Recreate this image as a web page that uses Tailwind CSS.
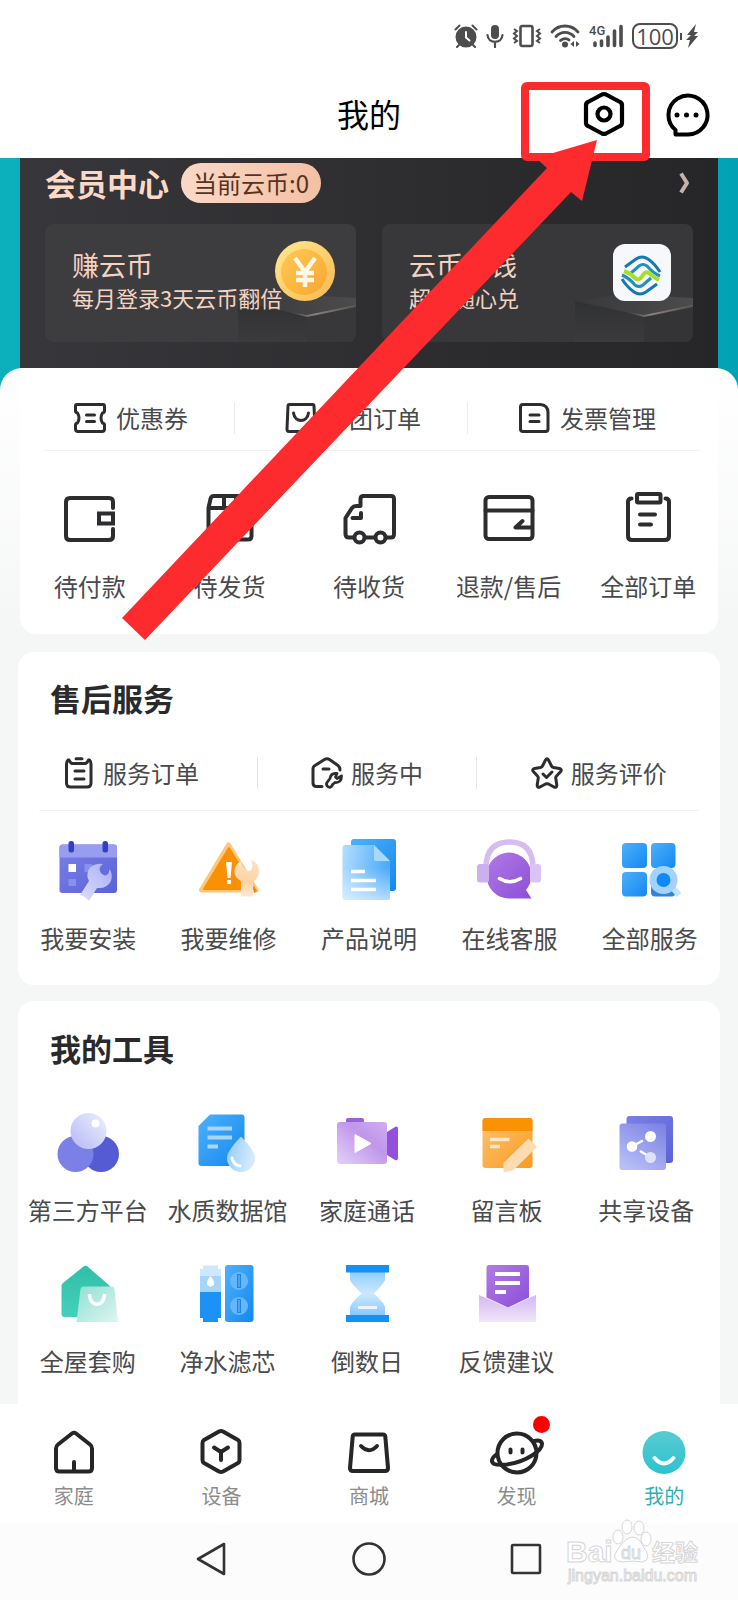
<!DOCTYPE html>
<html lang="zh-CN">
<head>
    <meta charset="UTF-8">
    <meta name="viewport" content="width=device-width, initial-scale=1.0">
    <title>我的</title>
    <script src="https://cdn.jsdelivr.net/npm/@tailwindcss/browser@4"></script>
</head>
<body class="relative bg-white font-['Noto_Sans_CJK_SC',sans-serif] text-[#4a4a4c]">
    <!-- Status bar -->
    <div class="flex h-[72px] items-center justify-end gap-2 pr-10 text-[#4d4d4d]">
        <svg class="h-6 w-6" viewBox="0 0 24 24" fill="none" stroke="currentColor" stroke-width="2" stroke-linecap="round">
            <circle cx="12" cy="13" r="9.5" fill="currentColor"/>
            <path d="M1.5 5.5L5.5 1.5M22.5 5.5L18.5 1.5M5 21L3 23M19 21L21 23"/>
            <path d="M12 8V13.5L15.5 16.5" stroke="#fff"/>
        </svg>
        <svg class="h-6 w-[18px]" viewBox="0 0 18 24" fill="none" stroke="currentColor" stroke-width="2.2" stroke-linecap="round">
            <rect x="5" y="1" width="8" height="14" rx="4" fill="currentColor" stroke="none"/>
            <path d="M1.5 11C2 20 16 20 16.5 11M9 18V23"/>
        </svg>
        <svg class="h-6 w-[30px]" viewBox="0 0 30 24" fill="none" stroke="currentColor" stroke-width="2">
            <rect x="8.5" y="2" width="12" height="20" rx="2" stroke-width="2.6"/>
            <path d="M2 5L5 7L2 9.5L5 12L2 14.5L5 17L2 19M28 5L25 7L28 9.5L25 12L28 14.5L25 17L28 19"/>
        </svg>
        <svg class="h-6 w-[30px]" viewBox="0 0 30 24" fill="none" stroke="currentColor" stroke-width="2.8" stroke-linecap="round">
            <path d="M2 8C9 0 21 0 28 8M6 12.5C11 7 19 7 24 12.5M10.5 16.5C13 14 17 14 19 16"/>
            <circle cx="15" cy="20.5" r="3" fill="currentColor" stroke="none"/>
            <path d="M24 17V23L20.5 20ZM26 17V23L29.5 20Z" fill="currentColor" stroke="none"/>
        </svg>
        <svg class="h-7 w-9 overflow-visible" viewBox="0 0 36 28" fill="none" stroke="currentColor" stroke-width="3.6" stroke-linecap="round">
            <text x="1" y="13" font-size="13" font-weight="500" font-family="Roboto, sans-serif" fill="currentColor" stroke="none">4G</text>
            <path d="M7 21V23.500M13.500 19V23.500M20 15V23.500M26.500 9V23.500M33 4.500V23.500"/>
        </svg>
        <div class="flex items-center">
            <div class="flex h-[26px] w-[46px] items-center justify-center rounded-lg border-2 border-[#4d4d4d] font-['Open_Sans',sans-serif] text-[22px] leading-[22px]">100</div>
            <div class="ml-[2px] h-[7px] w-[2px] bg-[#4d4d4d]"></div>
            <svg class="ml-1 h-6 w-3" viewBox="0 0 12 24" fill="currentColor"><path d="M10 0L1 11H5L0 16H4L2 24L12 12H8L12 8H8Z"/></svg>
        </div>
    </div>

    <!-- Title bar -->
    <header class="grid h-[86px] grid-cols-3 items-center px-7">
        <h1 class="col-start-2 pb-1 text-center text-[32px] leading-[48px] text-black">我的</h1>
        <div class="flex items-center justify-end gap-[34px]">
            <button type="button" aria-label="设置">
                <svg class="h-12 w-12" viewBox="0 0 48 48" fill="none" stroke="#000" stroke-width="4.2" stroke-linejoin="round">
                    <path d="M22 3.5Q24 2.500 26 3.5L40 11Q42 12 42 14V32Q42 34 40 35L26 42.5Q24 43.5 22 42.5L8 35Q6 34 6 32V14Q6 12 8 11Z"/>
                    <circle cx="24" cy="23" r="6.5"/>
                </svg>
            </button>
            <button type="button" aria-label="消息">
                <svg class="h-12 w-12" viewBox="0 0 48 48" fill="none" stroke="#000" stroke-width="4" stroke-linejoin="round">
                    <path d="M13.5 43.5V39A19.5 19.5 0 1 1 25 43.5Z"/>
                    <g fill="#000" stroke="none"><circle cx="15" cy="24" r="2.5"/><circle cx="24.5" cy="24" r="2.5"/><circle cx="34" cy="24" r="2.5"/></g>
                </svg>
            </button>
        </div>
    </header>

    <main class="bg-gradient-to-r from-[#0cb0bc] to-[#00a2b4]">
        <!-- Member center -->
        <section class="mx-5 bg-gradient-to-r from-[#37373b] to-[#262628] px-[25px] pt-[5px] pb-[26px]">
            <div class="flex h-10 items-center">
                <h2 class="text-[31px] leading-10 font-bold text-[#fcd9c7]">会员中心</h2>
                <span class="ml-3 flex h-10 items-center rounded-full bg-gradient-to-r from-[#fbd8c6] to-[#f4c0a4] px-3 text-2xl text-[#54331f]">当前云币:0</span>
                <a href="#" aria-label="会员中心" class="ml-auto">
                    <svg class="h-6 w-4" viewBox="0 0 16 24" fill="none" stroke="#c5b3aa" stroke-width="4"><path d="M4 2.5L10 12L4 21.5" stroke-linejoin="round"/></svg>
                </a>
            </div>
            <div class="mt-[21px] grid grid-cols-2 gap-[26px]">
                <a href="#" class="relative h-[118px] overflow-hidden rounded-lg bg-[#3d3d40] pt-5 pl-[27px]">
                    <svg class="absolute right-0 bottom-0 h-[118px] w-[118px]" viewBox="0 0 118 118">
                        <defs>
                            <linearGradient id="blockL" x2="0" y2="1"><stop stop-color="#303133"/><stop offset="1" stop-color="#3b3b3e"/></linearGradient>
                            <linearGradient id="blockTop"><stop stop-color="#38383b"/><stop offset=".7" stop-color="#464647"/><stop offset="1" stop-color="#4d4b4b"/></linearGradient>
                            <linearGradient id="edge"><stop stop-color="#8a817c" stop-opacity="0"/><stop offset=".4" stop-color="#8a817c"/><stop offset="1" stop-color="#8a817c" stop-opacity=".3"/></linearGradient>
                            <linearGradient id="coinG" x2="1" y2="1"><stop stop-color="#ffe98f"/><stop offset="1" stop-color="#f7b850"/></linearGradient>
                            <linearGradient id="coinIn" x2="1" y2="1"><stop stop-color="#fdca55"/><stop offset="1" stop-color="#f9a630"/></linearGradient>
                        </defs>
                        <path d="M0 77L69 92V118H0Z" fill="url(#blockL)"/>
                        <path d="M69 92L118 82V118H69Z" fill="#38383a"/>
                        <path d="M0 77L50 70L118 74V82L69 92Z" fill="url(#blockTop)"/>
                        <path d="M50 88L69 91L118 81V83L69 93Z" fill="url(#edge)"/>
                        <circle cx="67" cy="47" r="30" fill="url(#coinG)"/>
                        <circle cx="66" cy="48" r="23" fill="url(#coinIn)"/>
                        <path d="M57 34L67 48L77 34M67 48V63M58 49H76M58 56H76" fill="none" stroke="#fff8e8" stroke-width="4.5"/>
                    </svg>
                    <p class="relative text-[27px] leading-[42px] text-[#f6d2c1]">赚云币</p>
                    <p class="relative text-[22px] leading-[22px] text-[#f6d2c1]">每月登录3天云币翻倍</p>
                </a>
                <a href="#" class="relative h-[118px] overflow-hidden rounded-lg bg-[#38383a] pt-5 pl-[27px]">
                    <svg class="absolute right-0 bottom-0 h-[118px] w-[118px]" viewBox="0 0 118 118">
                        <path d="M0 77L69 92V118H0Z" fill="url(#blockL)"/>
                        <path d="M69 92L118 82V118H69Z" fill="#343436"/>
                        <path d="M0 77L50 70L118 74V82L69 92Z" fill="url(#blockTop)"/>
                        <path d="M50 88L69 91L118 81V83L69 93Z" fill="url(#edge)"/>
                        <rect x="38" y="20" width="58" height="57" rx="12" fill="#f7f8fb"/>
                        <!-- two mirrored ribbons around a green wave -->
                        <g fill="none" stroke-width="3">
                            <path d="M50 43L61 35Q67 31 73 35Q80 40 85 48" stroke="#1478b8"/>
                            <path d="M56 49L64 42Q68 39 72 42Q78 49 85 52" stroke="#2190bd"/>
                            <path d="M82 60L71 68Q65 72 59 68Q52 63 47 55" stroke="#1478b8"/>
                            <path d="M76 54L68 61Q64 64 60 61Q54 54 47 51" stroke="#2190bd"/>
                            <path d="M49 47Q55 49 60 54Q64 58 68 51Q71 46 75 50Q80 54 84 56" stroke="#a6df25" stroke-width="4"/>
                        </g>
                    </svg>
                    <p class="relative text-[27px] leading-[42px] text-[#f6d2c1]">云币当钱</p>
                    <p class="relative text-[22px] leading-[22px] text-[#f6d2c1]">超值随心兑</p>
                </a>
            </div>
        </section>

        <div class="overflow-hidden rounded-t-[22px] bg-gradient-to-b from-white to-[#f5f7f6] to-25%">
            <!-- Orders -->
            <section class="mx-5 rounded-b-2xl bg-white pt-[18px] pb-[30px]">
                <nav class="flex h-16 items-center pr-4 pl-1 text-2xl">
                    <a href="#" class="flex flex-auto items-center justify-center gap-[10px] pl-1">
                        <svg class="h-8 w-8" viewBox="0 0 32 32" fill="none" stroke="#2d2d2f" stroke-width="3" stroke-linejoin="round" stroke-linecap="round"><path d="M3 2.5H29Q30.5 2.5 30.5 4V9Q30.5 10.5 28.5 11Q25.5 16 28.5 21Q30.5 21.5 30.5 23V27Q30.5 29.5 28 29.5H4Q1.5 29.5 1.5 27V23Q1.5 21.5 3.5 21Q6.5 16 3.5 11Q1.5 10.5 1.5 9V4Q1.5 2.5 3 2.5ZM12.5 13H20.5M12.5 19.5H20.5"/></svg>
                        优惠券
                    </a>
                    <span class="h-8 w-px bg-[#ececec]"></span>
                    <a href="#" class="flex flex-auto items-center justify-center gap-2 pl-1">
                        <svg class="h-8 w-8" viewBox="0 0 32 32" fill="none" stroke="#2d2d2f" stroke-width="3" stroke-linejoin="round" stroke-linecap="round"><path d="M4.5 2.5H27.5Q29 2.5 29 4L30 27Q30 29.5 28 29.5H4Q2 29.5 2 27L3 4Q3 2.5 4.5 2.5ZM8.5 11C10 21 22 21 23.5 11"/></svg>
                        拼团订单
                    </a>
                    <span class="h-8 w-px bg-[#ececec]"></span>
                    <a href="#" class="flex flex-auto items-center justify-center gap-[10px] pl-1">
                        <svg class="h-8 w-8" viewBox="0 0 32 32" fill="none" stroke="#2d2d2f" stroke-width="3" stroke-linejoin="round" stroke-linecap="round"><path d="M5 2.5H22Q30 3 30 10.5V27Q30 29.5 27.5 29.5H5Q2.5 29.5 2.5 27V5Q2.5 2.5 5 2.5ZM12 13H21M12 19.5H21"/></svg>
                        发票管理
                    </a>
                </nav>
                <div class="mr-[18px] ml-6 h-px bg-[#f0f0f0]"></div>
                <nav class="grid grid-cols-5 pt-[35px] text-2xl leading-9 whitespace-nowrap">
                    <a href="#" class="flex flex-col items-center gap-[18px]">
                        <svg class="h-16 w-16" viewBox="0 0 64 64" fill="none" stroke="#2d2d2f" stroke-width="4"><path d="M55 22V16Q55 12 51 12H12Q8 12 8 16V50Q8 54 12 54H51Q55 54 55 50V43" stroke-linecap="round"/><path d="M57 27.5H41V37.5H57M55 26V39"/></svg>
                        待付款
                    </a>
                    <a href="#" class="flex flex-col items-center gap-[18px]">
                        <svg class="h-16 w-16" viewBox="0 0 64 64" fill="none" stroke="#2d2d2f" stroke-width="4" stroke-linejoin="round"><path d="M17 10H49Q52 10 52.5 13L54.5 22V50Q54.5 53.5 51 53.5H15Q11.5 53.5 11.5 50V22L13.5 13Q14 10 17 10ZM11.5 22H54.5M27 10V22M39 10V22M43 43H47"/></svg>
                        待发货
                    </a>
                    <a href="#" class="flex flex-col items-center gap-[18px]">
                        <svg class="h-16 w-16" viewBox="0 0 64 64" fill="none" stroke="#2d2d2f" stroke-width="4" stroke-linejoin="round" stroke-linecap="round"><path d="M17 51.5H12Q8.5 51.5 8.5 48V32L15 22Q16.5 20 19 20H23.5V13Q23.5 10 26.5 10H54Q57 10 57 13V48Q57 51.5 54 51.5H49M28 51.5H38M24 27V32H15.5"/><circle cx="22.5" cy="51.5" r="5"/><circle cx="43.5" cy="51.5" r="5"/></svg>
                        待收货
                    </a>
                    <a href="#" class="flex flex-col items-center gap-[18px]">
                        <svg class="h-16 w-16" viewBox="0 0 64 64" fill="none" stroke="#2d2d2f" stroke-width="4" stroke-linejoin="round" stroke-linecap="round"><rect x="8.5" y="11" width="47" height="42" rx="3.5"/><path d="M8.5 24.5H55.5M45.5 35L38.5 41.5H55"/></svg>
                        退款/售后
                    </a>
                    <a href="#" class="flex flex-col items-center gap-[18px]">
                        <svg class="h-16 w-16" viewBox="0 0 64 64" fill="none" stroke="#2d2d2f" stroke-width="4" stroke-linejoin="round" stroke-linecap="round"><path d="M15.5 12.5Q12 12.5 12 16V50Q12 54 16 54H49Q53 54 53 50V16Q53 12.5 49.5 12.5"/><rect x="21" y="8" width="23.5" height="8.5" rx="1"/><path d="M24 28.5H39M24 38.5H35"/></svg>
                        全部订单
                    </a>
                </nav>
            </section>

            <!-- After-sales -->
            <section class="mx-[18px] mt-[18px] rounded-2xl bg-white pt-[23px] pb-[29px]">
                <h2 class="pl-8 text-[31px] leading-[46px] font-bold text-[#2a2a2c]">售后服务</h2>
                <nav class="mt-[15px] flex h-[74px] items-center text-2xl">
                    <a href="#" class="flex w-[34%] flex-none items-center gap-2 pl-[45px]">
                        <svg class="h-8 w-8" viewBox="0 0 32 32" fill="none" stroke="#2d2d2f" stroke-width="3" stroke-linejoin="round" stroke-linecap="round"><path d="M6 3H5Q3.5 4 3.5 8V26Q3.5 30 7.5 30H24Q28 30 28 26V8Q28 4 26.5 3H25.5M6 3C8 7 9 6.5 11.5 6.5H20C22.5 6.5 23.5 7 25.5 3M13 1.8H19M12 14H21M12 22H21"/></svg>
                        服务订单
                    </a>
                    <span class="h-8 w-px bg-[#e6e6e6]"></span>
                    <a href="#" class="flex flex-auto items-center justify-center gap-2">
                        <svg class="h-8 w-8" viewBox="0 0 32 32" fill="none" stroke="#2d2d2f" stroke-width="3" stroke-linejoin="round" stroke-linecap="round"><path d="M11 29.5H5.5Q2 29.5 2 26V12Q2 9.5 4 8.5L13.5 2.5Q16 1 18.5 2.5L27 8.5Q29 10 29 13M12 12H18"/><path d="M26 16.5Q20 15.5 19 21.5L16 25.5Q14.5 28.5 17.5 30Q20.5 31 21.5 27.5L24 25.5Q30.5 26 30.5 19L26 21.5L24.5 20Z" stroke-width="2.8"/></svg>
                        服务中
                    </a>
                    <span class="h-8 w-px bg-[#e6e6e6]"></span>
                    <a href="#" class="flex flex-auto items-center justify-center gap-2">
                        <svg class="h-8 w-8" viewBox="0 0 32 32" fill="none" stroke="#2d2d2f" stroke-width="3" stroke-linejoin="round" stroke-linecap="round"><path d="M14.5 3Q16 .5 17.5 3L20.5 9Q21 10 22.5 10.5L28.5 11.5Q31.5 12.5 29.5 14.8L25.5 19Q24.5 20 24.8 21.5L25.8 28Q26 31 23 30L17.5 27Q16 26.5 14.5 27L9 30Q6 31 6.2 28L7.2 21.5Q7.5 20 6.5 19L2.5 14.8Q.5 12.5 3.5 11.5L9.5 10.5Q11 10 11.5 9Z"/><path d="M12 17L15.5 20.5L21 15"/></svg>
                        服务评价
                    </a>
                </nav>
                <div class="mx-[21px] h-px bg-[#f2f2f2]"></div>
                <nav class="grid grid-cols-5 pt-[27px] text-2xl leading-9 whitespace-nowrap">
                    <a href="#" class="flex flex-col items-center gap-[18px]">
                        <svg class="h-16 w-16" viewBox="0 0 64 64">
                            <defs>
                                <linearGradient id="indigo" x2="1" y2="1"><stop stop-color="#7b80e6"/><stop offset="1" stop-color="#5a62d8"/></linearGradient>
                                <linearGradient id="lilac" x1="1" x2="0" y2="1"><stop stop-color="#a9aef3"/><stop offset="1" stop-color="#dcdefb"/></linearGradient>
                            </defs>
                            <rect x="3.5" y="6.5" width="57.5" height="48.5" rx="3" fill="url(#indigo)"/>
                            <path d="M3.5 19.5V9.5Q3.5 6.5 6.5 6.5H58Q61 6.5 61 9.5V19.5Z" fill="#989df0"/>
                            <rect x="12.5" y="3" width="5.5" height="11.5" rx="2.5" fill="#2f3fcb"/><rect x="46.5" y="3" width="5.5" height="11.5" rx="2.5" fill="#2f3fcb"/>
                            <path d="M12.5 26H20V34H12.5Z" fill="#fff"/><path d="M12.5 41H20V48H12.5ZM28.5 26H36V34H28.5Z" fill="#8a90ec"/>
                            <path d="M47 26Q37 24.5 32.5 32Q30 38 33 43L24 57Q29 58 33 63L41 50Q51 51 55 43Q57 36 53.5 31Q53 37 49 37.5Q44 36 43.5 31Q44 27.5 47 26Z" fill="url(#lilac)"/>
                        </svg>
                        我要安装
                    </a>
                    <a href="#" class="flex flex-col items-center gap-[18px]">
                        <svg class="h-16 w-16" viewBox="0 0 64 64">
                            <defs><linearGradient id="peach" x2="0" y2="1"><stop stop-color="#fde3c6"/><stop offset=".6" stop-color="#fbd3a4"/><stop offset="1" stop-color="#fde8d2"/></linearGradient></defs>
                            <path d="M31.5 7L59 52H4.5Z" fill="#fb9106" stroke="#fcc67c" stroke-width="5" stroke-linejoin="round"/>
                            <path d="M32 10L57 51H7Z" fill="#fa9104" stroke="#fa9104" stroke-width="2" stroke-linejoin="round"/>
                            <path d="M29 24H35L33.5 40H30.5ZM30 42H34V46H30Z" fill="#fff"/>
                            <path d="M44 23Q37 27 37.5 34Q38 40 44 43V58.5H56V44Q62 40 62 32Q61 25 54 21.5Q57 30 53 33Q45 32 44 23Z" fill="url(#peach)"/>
                            <path d="M57 48L60 53L57 55Z" fill="#e08a20"/>
                        </svg>
                        我要维修
                    </a>
                    <a href="#" class="flex flex-col items-center gap-[18px]">
                        <svg class="h-16 w-16" viewBox="0 0 64 64">
                            <defs>
                                <linearGradient id="blue" x2="1" y2="1"><stop stop-color="#4fb0fa"/><stop offset="1" stop-color="#1288f0"/></linearGradient>
                                <linearGradient id="sky" x2="1" y2=".2"><stop stop-color="#b5dffd"/><stop offset="1" stop-color="#4aabfa"/></linearGradient>
                                <linearGradient id="fadeW" x2="0" y2="1"><stop stop-color="#fff" stop-opacity="0"/><stop offset="1" stop-color="#fff" stop-opacity=".6"/></linearGradient>
                            </defs>
                            <rect x="14" y="1" width="45" height="52" rx="3" fill="url(#blue)"/>
                            <path d="M8.5 7H37L53 23V59Q53 62 50 62H8.5Q5.5 62 5.5 59V10Q5.5 7 8.5 7Z" fill="url(#sky)"/>
                            <path d="M5.5 30H53V59Q53 62 50 62H8.5Q5.5 62 5.5 59Z" fill="url(#fadeW)"/>
                            <path d="M37 7L53 23H39Q37 23 37 21Z" fill="#a9d8fd"/>
                            <path d="M14 33.5H28M14 42.5H39M14 51.5H39" stroke="#fff" stroke-width="3.5"/>
                        </svg>
                        产品说明
                    </a>
                    <a href="#" class="flex flex-col items-center gap-[18px]">
                        <svg class="h-16 w-16" viewBox="0 0 64 64">
                            <defs>
                                <linearGradient id="violet" x2="1" y2="1"><stop stop-color="#b27ae4"/><stop offset="1" stop-color="#8b4fd8"/></linearGradient>
                            </defs>
                            <path d="M49 52L54.5 60.5H32A22.5 23 0 1 1 54.5 38Q54 46 49 52Z" fill="url(#violet)"/>
                            <path d="M9 28Q10 4 32.5 4Q55 4 56 28" fill="none" stroke="#d5bdf1" stroke-width="5.5"/>
                            <rect x="0" y="26" width="12" height="18.5" rx="3" fill="#cdaeee"/><rect x="53" y="26" width="11" height="18.5" rx="3" fill="#d9c3f3"/>
                            <path d="M22.5 40.5Q33 47 43.5 40.5" fill="none" stroke="#fff" stroke-width="3.5" stroke-linecap="round"/>
                        </svg>
                        在线客服
                    </a>
                    <a href="#" class="flex flex-col items-center gap-[18px]">
                        <svg class="h-16 w-16" viewBox="0 0 64 64">
                            <rect x="4" y="5" width="25" height="25" rx="4" fill="url(#blue)"/><rect x="33" y="5" width="24.5" height="25" rx="4" fill="url(#blue)"/>
                            <rect x="4" y="34" width="25" height="24.5" rx="4" fill="url(#blue)"/><rect x="33" y="34" width="24.5" height="24.5" rx="4" fill="#2e86d8"/>
                            <path d="M55 50L61 57" stroke="#c4e3fd" stroke-width="6"/>
                            <circle cx="45.5" cy="42" r="14" fill="#a3d3fc"/><circle cx="45.5" cy="42" r="7" fill="#0f89f5"/>
                        </svg>
                        全部服务
                    </a>
                </nav>
            </section>

            <!-- Tools -->
            <section class="mx-[18px] mt-4 rounded-t-2xl bg-white pt-6 pb-[25px]">
                <h2 class="pl-8 text-[31px] leading-[46px] font-bold text-[#2a2a2c]">我的工具</h2>
                <nav class="mt-[39px] grid grid-cols-5 gap-y-[33px] pr-1 text-2xl leading-9 whitespace-nowrap">
                    <a href="#" class="flex flex-col items-center gap-[18px]">
                        <svg class="h-16 w-16" viewBox="0 0 64 64">
                            <defs><linearGradient id="pearl" x1="1" x2="0" y2="1"><stop stop-color="#eef0fd"/><stop offset="1" stop-color="#b4b8f5"/></linearGradient></defs>
                            <circle cx="45" cy="44" r="18" fill="#555bd2"/><circle cx="19.5" cy="44" r="18" fill="#7a80e6"/>
                            <circle cx="32.5" cy="21" r="18" fill="url(#pearl)"/><circle cx="39.5" cy="13.5" r="4" fill="#fff"/>
                        </svg>
                        第三方平台
                    </a>
                    <a href="#" class="flex flex-col items-center gap-[18px]">
                        <svg class="h-16 w-16" viewBox="0 0 64 64">
                            <defs><linearGradient id="dropG" x2="1" y2=".3"><stop stop-color="#8ecafb"/><stop offset="1" stop-color="#d5ebfd"/></linearGradient></defs>
                            <path d="M15 4.5H46.5Q49.5 4.5 49.5 7.5V53Q49.5 56 46.5 56H6.5Q3.5 56 3.5 53V16Z" fill="url(#blue)"/>
                            <path d="M12.5 18.5H37M12.5 27.5H37M12.5 36.5H23" stroke="#a6d6fd" stroke-width="4"/>
                            <path d="M46 26.5Q60 41 60 48A14 14 0 0 1 32 48Q32 41 46 26.5Z" fill="url(#dropG)"/>
                            <path d="M37 48Q38.5 55 45 56" fill="none" stroke="#fff" stroke-width="3" stroke-linecap="round"/>
                        </svg>
                        水质数据馆
                    </a>
                    <a href="#" class="flex flex-col items-center gap-[18px]">
                        <svg class="h-16 w-16" viewBox="0 0 64 64">
                            <defs><linearGradient id="cam" x1="1" x2="0" y2="1"><stop stop-color="#cfaef0"/><stop offset=".4" stop-color="#c096ea"/><stop offset="1" stop-color="#e3d2f7"/></linearGradient></defs>
                            <path d="M11 14V10Q11 8 13 8H27Q29 8 29 10V14Z" fill="#9a62d8"/>
                            <rect x="2" y="12" width="50" height="42" rx="3" fill="url(#cam)"/>
                            <path d="M52 22L60 17Q63 15.5 63 19V48Q63 51 60 50L52 45Z" fill="#9450db"/>
                            <path d="M20 24.5L36 33.5L20 42.5Z" fill="#fff" stroke="#fff" stroke-linejoin="round"/>
                        </svg>
                        家庭通话
                    </a>
                    <a href="#" class="flex flex-col items-center gap-[18px]">
                        <svg class="h-16 w-16" viewBox="0 0 64 64">
                            <defs><linearGradient id="note" x2="1" y2="1"><stop stop-color="#fdc374"/><stop offset="1" stop-color="#fa9a1c"/></linearGradient></defs>
                            <rect x="7.5" y="8" width="50" height="50" rx="3" fill="url(#note)"/>
                            <path d="M7.5 21V11Q7.5 8 10.5 8H54.5Q57.5 8 57.5 11V21Z" fill="#fa9204"/>
                            <path d="M15 29.5H34.5M15 36.5H25" stroke="#ffe6c4" stroke-width="3.5"/>
                            <path d="M53.5 28.5L62 37L38.5 60Q34 62 28.5 62V53Z" fill="#fddbb0"/>
                        </svg>
                        留言板
                    </a>
                    <a href="#" class="flex flex-col items-center gap-[18px]">
                        <svg class="h-16 w-16" viewBox="0 0 64 64">
                            <defs><linearGradient id="share" x1=".8" x2=".2" y2="1"><stop stop-color="#7d85e6"/><stop offset="1" stop-color="#b9bff5"/></linearGradient></defs>
                            <rect x="12.5" y="6" width="46.5" height="47" rx="3" fill="url(#indigo)"/>
                            <rect x="5.5" y="13.5" width="46.5" height="46.5" rx="3" fill="url(#share)"/>
                            <path d="M18 36.5L29 30.5M26 41L36 47" stroke="#fff" stroke-width="2.5"/>
                            <circle cx="18" cy="36.5" r="5.3" fill="#fff"/><circle cx="36.5" cy="26.5" r="5.5" fill="#fff"/><circle cx="36.5" cy="47.5" r="5.5" fill="#dfe2fc"/>
                        </svg>
                        共享设备
                    </a>
                    <a href="#" class="flex flex-col items-center gap-[18px]">
                        <svg class="h-16 w-16" viewBox="0 0 64 64">
                            <defs>
                                <linearGradient id="mint" x2="0" y2="1"><stop stop-color="#2fbfa8"/><stop offset="1" stop-color="#45d0bd"/></linearGradient>
                                <linearGradient id="bagG" x2="1" y2="1"><stop stop-color="#8fe0d3"/><stop offset="1" stop-color="#def5f1"/></linearGradient>
                            </defs>
                            <path d="M27.5 5.5Q29.5 4 31.5 5.5L54 25V56H8.5Q5.5 56 5.5 53V25Q5.5 23.5 7 22Z" fill="url(#mint)"/>
                            <path d="M27 25.5H56Q58 25.5 58.5 28L62 61H20.5L24.5 28Q25 25.5 27 25.5Z" fill="url(#bagG)"/>
                            <path d="M33.5 33C33.5 46.5 48.5 46.5 48.5 33" fill="none" stroke="#fff" stroke-width="3.5"/>
                        </svg>
                        全屋套购
                    </a>
                    <a href="#" class="flex flex-col items-center gap-[18px]">
                        <svg class="h-16 w-16" viewBox="0 0 64 64">
                            <path d="M5 8H26V57H23V61H8V57H5Z" fill="#1d92f6"/>
                            <path d="M5 8H26V31H5Z" fill="#a5d5fb"/><path d="M8 4.5H23V8H26V15H5V8H8Z" fill="#d0e8fd"/>
                            <path d="M15.5 15Q20 20.5 19 23.5Q15.5 28 12 23.5Q11 20.5 15.5 15Z" fill="#fff"/>
                            <rect x="30" y="4" width="28.5" height="57" rx="3" fill="url(#blue)"/>
                            <g fill="#66b7f9"><circle cx="44" cy="20" r="9"/><circle cx="44" cy="45" r="9"/></g>
                            <path d="M44 13V27M44 38V52" stroke="#1c86e6" stroke-width="4"/>
                            <path d="M44 14V26M44 39V51" stroke="#54aef6" stroke-width="1.5"/>
                        </svg>
                        净水滤芯
                    </a>
                    <a href="#" class="flex flex-col items-center gap-[18px]">
                        <svg class="h-16 w-16" viewBox="0 0 64 64">
                            <defs><linearGradient id="glass" x2="0" y2="1"><stop stop-color="#8dcdfc"/><stop offset=".5" stop-color="#cde8fe"/><stop offset="1" stop-color="#86c6fb"/></linearGradient></defs>
                            <path d="M15 10H50V19Q50 21 39 32.5Q50 43 50 46V55H15V46Q15 43 26.5 32.5Q15 21 15 19Z" fill="url(#glass)"/>
                            <path d="M11 4H54V11.5H11ZM11 54H54V61H11Z" fill="#1590f5"/>
                            <path d="M23 46.5H42" stroke="#eaf6ff" stroke-width="3"/>
                        </svg>
                        倒数日
                    </a>
                    <a href="#" class="flex flex-col items-center gap-[18px]">
                        <svg class="h-16 w-16" viewBox="0 0 64 64">
                            <defs><linearGradient id="env" x2="0" y2="1"><stop stop-color="#d3b6f0"/><stop offset="1" stop-color="#f1e6fb"/></linearGradient></defs>
                            <path d="M4 34L33 47L61 34V61H4Z" fill="url(#env)"/>
                            <path d="M14 4H51Q54 4 54 7V36.5L33 46.5L11.5 36.5V7Q11.5 4 14 4Z" fill="url(#violet)"/>
                            <path d="M20 13H45M20 22H45M20 31H31" stroke="#fff" stroke-width="4"/>
                        </svg>
                        反馈建议
                    </a>
                </nav>
            </section>
        </div>
    </main>

    <!-- Tab bar -->
    <nav class="grid grid-cols-5 bg-white pt-6 pb-3 text-xl leading-7 text-[#8c8c8c]">
        <a href="#" class="flex flex-col items-center gap-[6px]">
            <svg class="h-12 w-12" viewBox="0 0 48 48" fill="none" stroke="#262628" stroke-width="4" stroke-linejoin="round" stroke-linecap="round"><path d="M22 5.5Q24 4 26 5.5L40 16.5Q42 18 42 20.5V40Q42 43.5 38.5 43.5H9.5Q6 43.5 6 40V20.5Q6 18 8 16.5ZM24 34V42"/></svg>
            家庭
        </a>
        <a href="#" class="flex flex-col items-center gap-[6px]">
            <svg class="h-12 w-12" viewBox="0 0 48 48" fill="none" stroke="#262628" stroke-width="4" stroke-linejoin="round" stroke-linecap="round"><path d="M22 3.5Q24 2.5 26 3.5L41 12Q42.5 13 42.5 15V32Q42.5 34 41 35L26 43.5Q24 44.5 22 43.5L7 35Q5.5 34 5.5 32V15Q5.5 13 7 12ZM17 19.5L24 24L31 19.5M24 24V32"/></svg>
            设备
        </a>
        <a href="#" class="flex flex-col items-center gap-[6px]">
            <svg class="h-12 w-12" viewBox="0 0 48 48" fill="none" stroke="#262628" stroke-width="4" stroke-linejoin="round" stroke-linecap="round"><path d="M10 6.5H38Q40 6.5 40.3 8.5L43 40Q43 43 40 43H8Q5 43 5 40L7.7 8.5Q8 6.5 10 6.5ZM16 18Q24 26.5 32 18"/></svg>
            商城
        </a>
        <a href="#" class="relative flex flex-col items-center gap-[6px]">
            <svg class="h-12 w-14" viewBox="0 0 56 48" fill="none" stroke="#262628" stroke-width="4" stroke-linecap="round">
                <circle cx="28" cy="25" r="19.5"/>
                <path d="M44 13.5Q52 11 53 15.5Q53.5 21 43 27.5Q32 34.5 18 36.5Q4 38 3 33.5Q2.5 30 8 26"/>
                <path d="M21.5 21.5V24.5M33.5 21.5V24.5"/>
            </svg>
            <span class="absolute -top-3 left-1/2 ml-4 h-[17px] w-[17px] rounded-full bg-[#fb0000]"></span>
            发现
        </a>
        <a href="#" class="flex flex-col items-center gap-[6px] text-[#2fafb4]">
            <svg class="h-12 w-12" viewBox="0 0 48 48"><defs><linearGradient id="me" x2="0" y2="1"><stop stop-color="#58cbd2"/><stop offset="1" stop-color="#2cc3cf"/></linearGradient></defs><circle cx="24" cy="24.5" r="21.5" fill="url(#me)"/><path d="M14.500 30Q24 41 33.5 30" fill="none" stroke="#fff" stroke-width="4" stroke-linecap="round"/></svg>
            我的
        </a>
    </nav>

    <!-- System navigation -->
    <div class="relative flex h-[78px] items-center justify-center gap-[121px] bg-[#fcfcfc] pb-1">
        <button type="button" aria-label="返回"><svg class="h-9 w-9" viewBox="0 0 36 36" fill="none" stroke="#333" stroke-width="2.6" stroke-linejoin="round"><path d="M30 3V33L4 18Z"/></svg></button>
        <button type="button" aria-label="主页"><svg class="h-9 w-9" viewBox="0 0 36 36" fill="none" stroke="#333" stroke-width="2.6"><circle cx="18" cy="18" r="15.5"/></svg></button>
        <button type="button" aria-label="多任务"><svg class="h-9 w-9" viewBox="0 0 36 36" fill="none" stroke="#333" stroke-width="2.6"><rect x="4" y="4" width="28" height="28" rx="1"/></svg></button>
        <svg class="absolute -top-1 right-9 h-[72px] w-[136px]" viewBox="0 0 136 72" fill="#fff" stroke="#d6d6d6" stroke-width="1">
            <g font-family="Liberation Sans, sans-serif" font-weight="bold">
                <text x="0" y="44" font-size="30">Bai</text>
                <ellipse cx="52" cy="19" rx="5" ry="7"/><ellipse cx="61" cy="9" rx="5" ry="7"/><ellipse cx="73" cy="10" rx="5" ry="7"/><ellipse cx="80" cy="21" rx="5" ry="7"/>
                <path d="M66 19Q73 19 77 28Q87 42 76 44Q66 42 57 44Q43 43 52 31Q59 20 66 19Z"/>
                <text x="55" y="41" font-size="18" font-weight="normal">du</text>
            </g>
            <text x="86" y="43" font-size="23" font-weight="bold" font-family="Noto Sans CJK SC, sans-serif">经验</text>
            <text x="2" y="63" font-size="16" font-family="Liberation Sans, sans-serif">jingyan.baidu.com</text>
        </svg>
    </div>

    <!-- Callout: frame around settings with an arrow to it -->
    <svg class="pointer-events-none absolute top-0 left-0 h-[660px] w-[738px]" viewBox="0 0 738 660" fill="#fd2b2d">
        <rect x="525" y="86" width="121" height="71" rx="2" fill="none" stroke="#fd2b2d" stroke-width="8"/>
        <path d="M122 618L547 168L536 158L597 140L582 201L571 192L145 640Z"/>
    </svg>
</body>
</html>
